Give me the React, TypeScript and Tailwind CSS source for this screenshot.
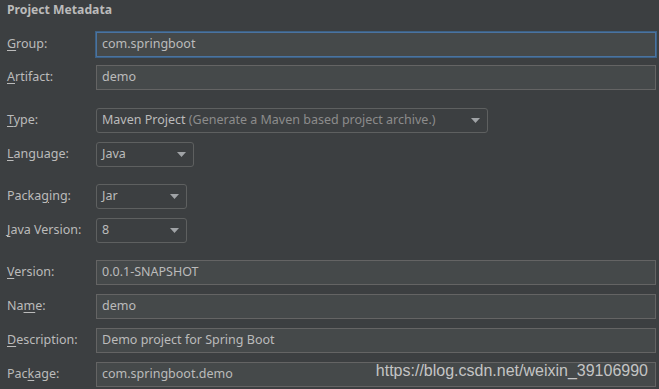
import type { ReactNode } from "react";

const font = { fontFamily: '"Noto Sans", "Open Sans", sans-serif' };

function Label({ pre, u, post }: { pre?: string; u: string; post: string }) {
  return (
    <div className="w-[96px] shrink-0 pl-[7px] text-[12.5px] text-[#bbbbbb]">
      {pre}
      <span className="underline underline-offset-2">{u}</span>
      {post}
    </div>
  );
}

function Field({ value, focused }: { value: string; focused?: boolean }) {
  return (
    <div
      className={
        focused
          ? "flex h-[25px] w-[560px] items-center border border-[#4a73a0] bg-[#45494a] pl-[5px] text-[12.5px] text-[#bbbbbb] shadow-[0_0_0_1px_#3d6185]"
          : "flex h-[25px] w-[560px] items-center border border-[#646464] bg-[#45494a] pl-[5px] text-[12.5px] text-[#bbbbbb]"
      }
    >
      {value}
    </div>
  );
}

function Select({ width, children }: { width: string; children: ReactNode }) {
  return (
    <div
      className={`flex h-[25px] items-center justify-between rounded-[3px] border border-[#5e6060] bg-[#3c3f41] pl-[5px] pr-[7px] text-[12.5px] text-[#bbbbbb] ${width}`}
    >
      <span className="whitespace-nowrap">{children}</span>
      <svg width="9" height="5" viewBox="0 0 9 5">
        <path d="M0 0 H9 L4.5 5 Z" fill="#a0a3a6" />
      </svg>
    </div>
  );
}

function Row({ className, children }: { className?: string; children: ReactNode }) {
  return <div className={`flex items-center ${className ?? ""}`}>{children}</div>;
}

export default function App() {
  return (
    <div className="relative h-[389px] w-[659px] overflow-hidden bg-[#3c3f41]" style={font}>
      <div className="pl-[7px] pt-[1px] text-[12.2px] font-bold leading-[18px] text-[#bbbbbb]">
        Project Metadata
      </div>

      <div className="flex flex-col">
        <Row className="mt-[13px]">
          <Label u="G" post="roup:" />
          <Field value="com.springboot" focused />
        </Row>
        <Row className="mt-[8px]">
          <Label u="A" post="rtifact:" />
          <Field value="demo" />
        </Row>
        <Row className="mt-[18px]">
          <Label u="T" post="ype:" />
          <Select width="w-[392px]">
            Maven Project{" "}
            <span className="text-[#8c8c8c]">(Generate a Maven based project archive.)</span>
          </Select>
        </Row>
        <Row className="mt-[9px]">
          <Label u="L" post="anguage:" />
          <Select width="w-[98px]">Java</Select>
        </Row>
        <Row className="mt-[17px]">
          <Label pre="Packa" u="g" post="ing:" />
          <Select width="w-[91px]">Jar</Select>
        </Row>
        <Row className="mt-[9px]">
          <Label u="J" post="ava Version:" />
          <Select width="w-[91px]">8</Select>
        </Row>
        <Row className="mt-[17px]">
          <Label u="V" post="ersion:" />
          <Field value="0.0.1-SNAPSHOT" />
        </Row>
        <Row className="mt-[9px]">
          <Label pre="Na" u="m" post="e:" />
          <Field value="demo" />
        </Row>
        <Row className="mt-[9px]">
          <Label u="D" post="escription:" />
          <Field value="Demo project for Spring Boot" />
        </Row>
        <Row className="mt-[9px]">
          <Label pre="Pac" u="k" post="age:" />
          <Field value="com.springboot.demo" />
        </Row>
      </div>

      <div
        className="absolute right-[11px] top-[359px] text-[16px] text-[#d2d2d2] opacity-90"
        style={{ fontFamily: '"Liberation Sans", Arial, sans-serif' }}
      >
        https://blog.csdn.net/weixin_39106990
      </div>
    </div>
  );
}
